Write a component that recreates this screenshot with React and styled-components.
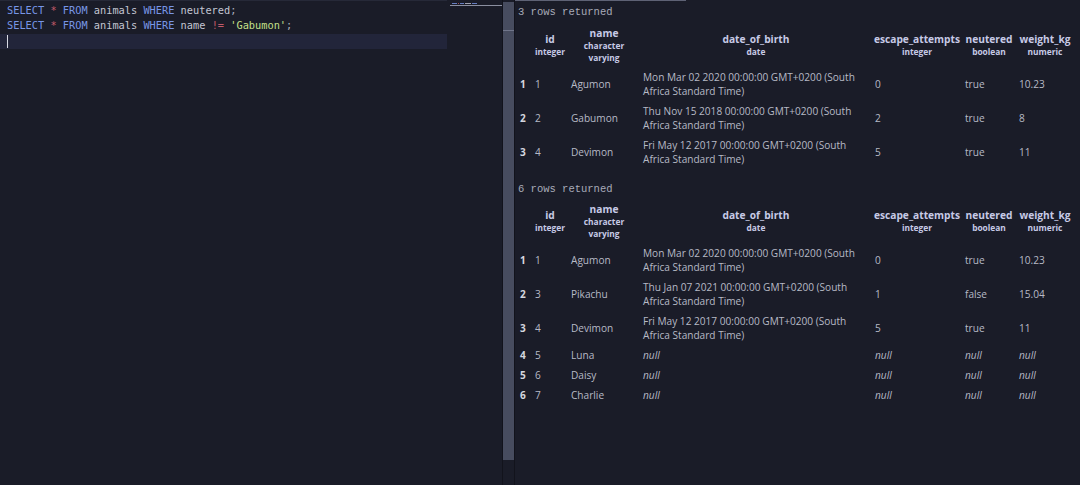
import styled, { createGlobalStyle } from "styled-components"

const GlobalStyle = createGlobalStyle`
  html, body {
    margin: 0;
    padding: 0;
    background: #1a1c28;
  }
`

const Page = styled.div`
  display: flex;
  width: 1080px;
  height: 485px;
  overflow: hidden;
  background: #1a1c28;
`

const Editor = styled.div`
  width: 502px;
  display: flex;
  flex-shrink: 0;
`

const Code = styled.div`
  width: 448px;
  padding-top: 1.5px;
  font-family: "DejaVu Sans Mono", "Liberation Mono", monospace;
  font-size: 10.3px;
  border-top: 1px solid #262938;
`

const Line = styled.div`
  height: 15.5px;
  line-height: 15.5px;
  padding-left: 7px;
  white-space: pre;
  color: #c3c6d3;
  background: ${props => props.active ? "#22253a" : "transparent"};
`

const Kw = styled.span`
  color: #7896e6;
`
const Op = styled.span`
  color: #c25a6a;
`
const Str = styled.span`
  color: #c5e08a;
`
const Punct = styled.span`
  color: #a9adbb;
`

const Cursor = styled.span`
  display: inline-block;
  width: 1px;
  height: 13px;
  vertical-align: middle;
  background: #d8dae4;
`

const Minimap = styled.div`
  flex: 1;
  padding: 3px 0 0 5px;
  display: flex;
  flex-direction: column;
  gap: 1px;
`

const MiniRow = styled.div`
  display: flex;
  gap: 1px;
  height: 1px;
`

const MiniBit = styled.span`
  height: 1px;
  width: ${props => props.w}px;
  background: ${props => props.c};
  opacity: 0.8;
`

const MiniRule = styled.div`
  height: 1px;
  margin-left: -2px;
  background: #8b8fa0;
  width: 52px;
`

const Splitter = styled.div`
  width: 11px;
  flex-shrink: 0;
  display: flex;
  flex-direction: column;
  border-left: 1px solid #12131c;
  border-right: 1px solid #12131c;
`

const Thumb = styled.div`
  margin-top: 2px;
  height: 458px;
  background: #474c5f;
  display: flex;
  flex-direction: column;
`

const ThumbMark = styled.div`
  margin-top: 28px;
  height: 1px;
  background: #70758a;
`

const Results = styled.div`
  flex: 1;
  padding-left: 3px;
  display: flex;
  flex-direction: column;
`

const TabLine = styled.div`
  height: 1px;
  width: 171px;
  margin-left: -3px;
  background: #5e6275;
`

const Count = styled.div`
  font-family: "Liberation Mono", "Courier New", monospace;
  font-size: 10.5px;
  line-height: 14px;
  color: #a8abb8;
  padding: ${props => props.first ? "4px 0 5px" : "13px 0 4px"};
`

const Table = styled.table`
  border-collapse: collapse;
  table-layout: fixed;
  width: 556px;
  font-family: "Open Sans", "Noto Sans", sans-serif;
  font-size: 10.1px;
  color: #b7bac6;

  th, td {
    box-sizing: border-box;
  }
`

const Th = styled.th`
  width: ${props => props.w}px;
  padding: 3px 0;
  text-align: center;
  vertical-align: middle;
  color: #c7cae6;
  white-space: nowrap;
`

const ColName = styled.div`
  font-size: 10.2px;
  font-weight: 700;
  line-height: 13px;
`

const ColType = styled.div`
  font-size: 8.4px;
  font-weight: 700;
  line-height: 12px;
`

const Td = styled.td`
  padding: 3px 3px;
  line-height: 14px;
  vertical-align: middle;
  text-align: left;
  font-style: ${props => props.isNull ? "italic" : "normal"};
`

const Idx = styled.td`
  padding: 3px 0 3px 2px;
  line-height: 14px;
  font-weight: 700;
  color: #d4d6df;
  vertical-align: middle;
`

const columns = [
  { name: "id", type: "integer", w: 36 },
  { name: "name", type: ["character", "varying"], w: 72 },
  { name: "date_of_birth", type: "date", w: 232 },
  { name: "escape_attempts", type: "integer", w: 90 },
  { name: "neutered", type: "boolean", w: 54 },
  { name: "weight_kg", type: "numeric", w: 58 },
]

const firstResult = [
  ["1", "Agumon", "Mon Mar 02 2020 00:00:00 GMT+0200 (South Africa Standard Time)", "0", "true", "10.23"],
  ["2", "Gabumon", "Thu Nov 15 2018 00:00:00 GMT+0200 (South Africa Standard Time)", "2", "true", "8"],
  ["4", "Devimon", "Fri May 12 2017 00:00:00 GMT+0200 (South Africa Standard Time)", "5", "true", "11"],
]

const secondResult = [
  ["1", "Agumon", "Mon Mar 02 2020 00:00:00 GMT+0200 (South Africa Standard Time)", "0", "true", "10.23"],
  ["3", "Pikachu", "Thu Jan 07 2021 00:00:00 GMT+0200 (South Africa Standard Time)", "1", "false", "15.04"],
  ["4", "Devimon", "Fri May 12 2017 00:00:00 GMT+0200 (South Africa Standard Time)", "5", "true", "11"],
  ["5", "Luna", null, null, null, null],
  ["6", "Daisy", null, null, null, null],
  ["7", "Charlie", null, null, null, null],
]

const ResultTable = ({ rows }) => (
  <Table>
    <thead>
      <tr>
        <Th w={14} />
        {columns.map(col => (
          <Th key={col.name} w={col.w}>
            <ColName>{col.name}</ColName>
            {(Array.isArray(col.type) ? col.type : [col.type]).map(t => (
              <ColType key={t}>{t}</ColType>
            ))}
          </Th>
        ))}
      </tr>
    </thead>
    <tbody>
      {rows.map((row, i) => (
        <tr key={i}>
          <Idx>{i + 1}</Idx>
          {row.map((cell, j) => (
            <Td key={j} isNull={cell === null}>{cell === null ? "null" : cell}</Td>
          ))}
        </tr>
      ))}
    </tbody>
  </Table>
)

const App = () => {
  return (
    <Page>
      <GlobalStyle />
      <Editor>
        <Code>
          <Line>
            <Kw>SELECT</Kw> <Op>*</Op> <Kw>FROM</Kw> animals <Kw>WHERE</Kw> neutered<Punct>;</Punct>
          </Line>
          <Line>
            <Kw>SELECT</Kw> <Op>*</Op> <Kw>FROM</Kw> animals <Kw>WHERE</Kw> name <Op>!=</Op> <Str>'Gabumon'</Str><Punct>;</Punct>
          </Line>
          <Line active>
            <Cursor />
          </Line>
        </Code>
        <Minimap>
          <MiniRow>
            <MiniBit w={5} c="#7896e6" />
            <MiniBit w={1} c="#c25a6a" />
            <MiniBit w={4} c="#7896e6" />
            <MiniBit w={6} c="#c3c6d3" />
            <MiniBit w={5} c="#7896e6" />
          </MiniRow>
          <MiniRule />
        </Minimap>
      </Editor>
      <Splitter>
        <Thumb>
          <ThumbMark />
        </Thumb>
      </Splitter>
      <Results>
        <TabLine />
        <Count first>3 rows returned</Count>
        <ResultTable rows={firstResult} />
        <Count>6 rows returned</Count>
        <ResultTable rows={secondResult} />
      </Results>
    </Page>
  )
}

export default App
